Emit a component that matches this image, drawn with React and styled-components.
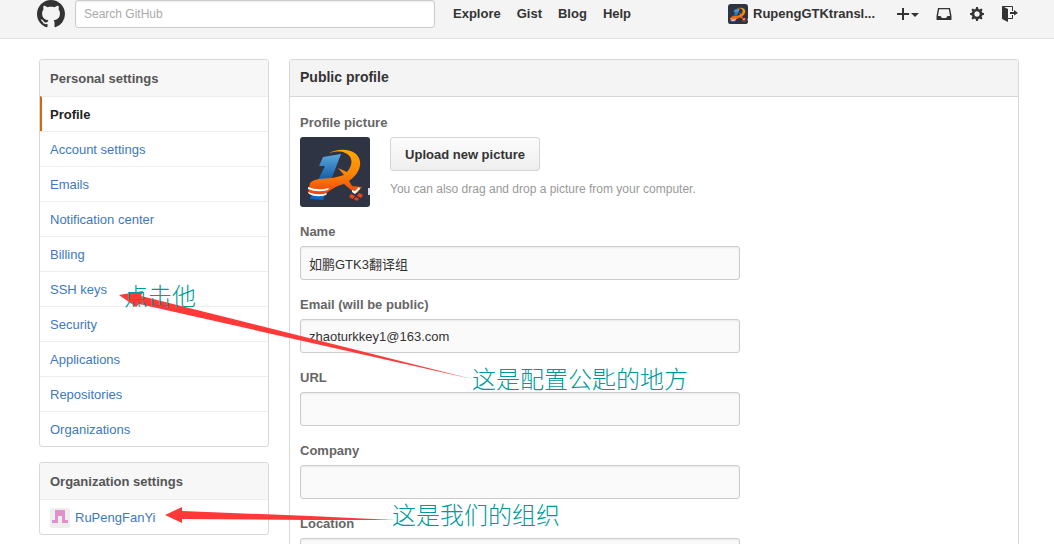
import React from "react";
import styled, { createGlobalStyle } from "styled-components";

const GlobalStyle = createGlobalStyle`
  * { box-sizing: border-box; }
  body {
    margin: 0;
    background: #fff;
    color: #333;
    font: 13px/18px "Liberation Sans", Arial, "Noto Sans CJK SC", sans-serif;
  }
`;

const Page = styled.div`
  position: relative;
  height: 100vh;
  overflow: hidden;
`;

const Header = styled.header`
  background: #f4f4f4;
  border-bottom: 1px solid #e2e2e2;
`;

const HeaderInner = styled.div`
  display: flex;
  align-items: flex-start;
  max-width: 1054px;
  height: 38px;
  margin: 0 auto;
  padding: 0 36px 0 37px;
`;

const LogoLink = styled.a`
  color: #333;
  height: 28px;
  margin-right: 10px;
  svg { display: block; }
`;

const SearchInput = styled.input`
  flex: 0 1 360px;
  min-width: 0;
  height: 28px;
  padding: 0 8px;
  border: 1px solid #ccc;
  border-radius: 3px;
  background: #fff;
  box-shadow: inset 0 1px 2px rgba(0, 0, 0, 0.075);
  font: 12px "Liberation Sans", Arial, sans-serif;
  color: #333;
  &::placeholder { color: #aaa; opacity: 1; }
`;

const TopNav = styled.nav`
  display: flex;
  gap: 16px;
  margin-left: 18px;
  line-height: 28px;
`;

const TopLink = styled.a`
  color: #333;
  font-weight: bold;
  text-decoration: none;
`;

const UserNav = styled.div`
  display: flex;
  align-items: center;
  height: 28px;
  margin-left: auto;
`;

const UserLink = styled(TopLink)`
  display: flex;
  align-items: center;
  gap: 5px;
  width: 149px;
  margin-right: 20px;
  svg { flex: none; }
  span { white-space: nowrap; }
`;

const IconButton = styled.button`
  display: flex;
  margin-right: ${(p) => p.$gap || 0}px;
  padding: 0;
  border: 0;
  background: none;
  color: #333;
  cursor: pointer;
`;

const Content = styled.div`
  display: flex;
  align-items: flex-start;
  gap: 20px;
  max-width: 1054px;
  margin: 0 auto;
  padding: 20px 35px 20px 39px;
`;

const Sidebar = styled.aside`
  display: flex;
  flex: none;
  flex-direction: column;
  gap: 15px;
  width: 230px;
`;

const Menu = styled.nav`
  overflow: hidden;
  border: 1px solid #d8d8d8;
  border-radius: 3px;
`;

const MenuTitle = styled.h2`
  margin: 0;
  padding: 10px 10px 8px;
  background: #f7f7f7;
  color: #555;
  font-size: 13px;
  line-height: 18px;
`;

const MenuItem = styled.a`
  display: flex;
  align-items: center;
  gap: 5px;
  height: 35px;
  padding: 2px 10px 0 ${(p) => (p.$selected ? 8 : 10)}px;
  border-top: 1px solid #eee;
  border-left: ${(p) => (p.$selected ? "2px solid #d26911" : "0")};
  color: ${(p) => (p.$selected ? "#222" : "#4078c0")};
  font-weight: ${(p) => (p.$selected ? "bold" : "normal")};
  text-decoration: none;
`;

const Panel = styled.main`
  flex: 1;
  min-width: 0;
  border: 1px solid #d8d8d8;
  border-radius: 3px;
`;

const PanelTitle = styled.h1`
  margin: 0;
  padding: 8px 10px 10px;
  border-bottom: 1px solid #d8d8d8;
  background: #f4f4f4;
  color: #333;
  font-size: 14px;
  line-height: 18px;
`;

const Form = styled.form`
  display: flex;
  flex-direction: column;
  gap: 16px;
  padding: 17px 10px;
`;

const Field = styled.div`
  display: flex;
  flex-direction: column;
  gap: 5px;
`;

const Label = styled.label`
  color: #666;
  font-weight: bold;
`;

const TextInput = styled.input`
  width: 440px;
  max-width: 100%;
  height: 34px;
  padding: 0 8px;
  border: 1px solid #ccc;
  border-radius: 3px;
  background: #fafafa;
  box-shadow: inset 0 1px 2px rgba(0, 0, 0, 0.075);
  color: #333;
  font: 13px "Liberation Sans", Arial, "Noto Sans CJK SC", sans-serif;
`;

const PictureRow = styled.div`
  display: flex;
  gap: 20px;
`;

const PictureSide = styled.div`
  display: flex;
  flex-direction: column;
  align-items: flex-start;
  gap: 9px;
`;

const UploadButton = styled.button`
  width: 150px;
  height: 34px;
  padding: 0;
  border: 1px solid #d5d5d5;
  border-radius: 3px;
  background: linear-gradient(#fcfcfc, #eee);
  color: #333;
  font: bold 13px "Liberation Sans", Arial, sans-serif;
  white-space: nowrap;
  cursor: pointer;
`;

const Hint = styled.p`
  margin: 0;
  color: #999;
  font-size: 12px;
`;

const Arrows = styled.svg`
  position: absolute;
  top: 0;
  left: 0;
  pointer-events: none;
`;

const Note = styled.span`
  position: absolute;
  top: ${(p) => p.$y}px;
  left: ${(p) => p.$x}px;
  color: #009999;
  font: 300 24px/30px "Noto Sans CJK SC", sans-serif;
  white-space: nowrap;
  pointer-events: none;
`;

const MarkIcon = () => (
  <svg width="28" height="28" viewBox="0 0 16 16" aria-hidden="true">
    <path fill="currentColor" d="M8 0C3.580 0 0 3.580 0 8c0 3.540 2.290 6.530 5.470 7.590.4.070.55-.17.55-.38 0-.19-.01-.82-.01-1.490-2.010.37-2.530-.49-2.690-.94-.09-.23-.48-.94-.82-1.130-.28-.15-.68-.52-.01-.53.63-.01 1.080.58 1.230.82.72 1.210 1.870.87 2.330.66.07-.52.28-.87.51-1.070-1.780-.2-3.640-.89-3.640-3.950 0-.87.31-1.590.82-2.150-.08-.2-.36-1.020.08-2.120 0 0 .67-.21 2.200.82.64-.18 1.320-.27 2-.27s1.360.09 2 .27c1.530-1.040 2.200-.82 2.200-.82.44 1.100.16 1.920.08 2.120.51.56.82 1.270.82 2.150 0 3.070-1.870 3.750-3.650 3.950.29.25.54.73.54 1.480 0 1.070-.01 1.930-.01 2.200 0 .21.15.46.55.38A8.010 8.010 0 0 0 16 8c0-4.420-3.580-8-8-8Z" />
  </svg>
);

const Avatar = ({ size }) => (
  <svg width={size} height={size} viewBox="0 0 70 70" aria-hidden="true">
    <defs>
      <linearGradient id={`blue${size}`} x1="0" y1="0" x2="0" y2="1">
        <stop offset="0" stopColor="#5aa9dc" />
        <stop offset="0.5" stopColor="#1c63ab" />
        <stop offset="1" stopColor="#1464c0" />
      </linearGradient>
      <linearGradient id={`orange${size}`} x1="0" y1="0" x2="0" y2="1">
        <stop offset="0" stopColor="#ffa800" />
        <stop offset="0.55" stopColor="#f98208" />
        <stop offset="1" stopColor="#ee3c10" />
      </linearGradient>
    </defs>
    <rect width="70" height="70" rx={size > 30 ? 3 : 10} fill="#2f3445" />
    <path d="M23 20 41 17 31 43 23 63 10 62 12 57 18 43 25 29 19 29Z" fill={`url(#blue${size})`} />
    <path d="M29 16C36 12 49 11 56 17C65 26 58 38 49 44L52 49 62 50 57 56 51 53 44 47C35 49 30 54 23 58C17 60 12 59 8 56L10 46C14 41 24 42 32 41C37 40 41 39 44 38L38 31 47 35C54 27 53 18 43 15C38 14 33 15 29 16Z" fill={`url(#orange${size})`} />
    <path d="M8 50Q18 54 29 51L28 53Q17 56 8 52ZM8 55Q18 59 27 56L26 58Q17 61 9 57Z" fill="#fff" />
    <path d="m52 53 3 1 4-4 1 2-5 5-3-2Z" fill="#fff" />
    <path d="m51 57 4 2-2 3-4-2Zm8-1 4 2-2 3-4-2Zm-3 4 3 2-2 2-3-2Z" fill="#ef4216" />
    <path d="M68 51h2v7h-2Z" fill="#d9dbe0" />
  </svg>
);

const PlusIcon = () => (
  <svg width="22" height="16" viewBox="0 0 22 16" aria-hidden="true" fill="currentColor">
    <path d="M5 2h2v5h5v2H7v5H5V9H0V7h5ZM14 7h8l-4 4Z" />
  </svg>
);

const InboxIcon = () => (
  <svg width="16" height="16" viewBox="0 0 16 16" aria-hidden="true">
    <path fill="currentColor" fillRule="evenodd" d="M2 2h12l1.500 8v4H.500v-4ZM3.200 3.200 2 10H4.500l1.500 2h4l1.500-2H14l-1.200-6.800Z" />
  </svg>
);

const GearIcon = () => (
  <svg width="14" height="16" viewBox="0 0 14 16" aria-hidden="true">
    <path fill="currentColor" fillRule="evenodd" d="M14 8.770v-1.600l-1.940-.640-.450-1.090.880-1.840-1.130-1.130-1.810.910-1.090-.450-.690-1.920h-1.600l-.630 1.940-1.110.450-1.840-.880-1.130 1.130.910 1.810-.450 1.090L0 7.230v1.590l1.940.640.450 1.090-.880 1.840 1.130 1.130 1.810-.910 1.090.450.690 1.920h1.590l.630-1.940 1.110-.450 1.840.880 1.130-1.130-.920-1.810.470-1.090L14 8.750ZM7 10.700c-1.500 0-2.700-1.200-2.700-2.700s1.200-2.700 2.700-2.700 2.700 1.200 2.700 2.700-1.200 2.700-2.700 2.700Z" />
  </svg>
);

const SignOutIcon = () => (
  <svg width="16" height="16" viewBox="0 0 16 16" aria-hidden="true">
    <path fill="currentColor" fillRule="evenodd" d="M12 9.500V8H8V6h4V4l4 3ZM10 12H6V3L2 1h8v4h1V1c0-.550-.450-1-1-1H1C.450 0 0 .450 0 1v11.380c0 .390.220.730.550.910L6 16.010V13h4c.550 0 1-.450 1-1V9h-1Z" />
  </svg>
);

const OrgIcon = () => (
  <svg width="20" height="20" viewBox="0 0 20 20" aria-hidden="true">
    <rect width="20" height="20" rx="2" fill="#eee" />
    <path fill="#e091c9" d="M5 2h10v10h3v3h-6V8H8v7H2v-3h3Z" />
  </svg>
);

const topLinks = ["Explore", "Gist", "Blog", "Help"];
const menuItems = [
  "Profile", "Account settings", "Emails", "Notification center", "Billing",
  "SSH keys", "Security", "Applications", "Repositories", "Organizations",
];
const fields = [
  { id: "name", label: "Name", value: "如鹏GTK3翻译组" },
  { id: "email", label: "Email (will be public)", value: "zhaoturkkey1@163.com" },
  { id: "url", label: "URL", value: "" },
  { id: "company", label: "Company", value: "" },
  { id: "location", label: "Location", value: "" },
];

export default function App() {
  return (
    <Page>
      <GlobalStyle />
      <Header>
        <HeaderInner>
          <LogoLink href="#" aria-label="GitHub"><MarkIcon /></LogoLink>
          <SearchInput type="text" placeholder="Search GitHub" aria-label="Search GitHub" />
          <TopNav>
            {topLinks.map((t) => <TopLink key={t} href="#">{t}</TopLink>)}
          </TopNav>
          <UserNav>
            <UserLink href="#"><Avatar size={20} /><span>RupengGTKtransl...</span></UserLink>
            <IconButton $gap={17} aria-label="Create new"><PlusIcon /></IconButton>
            <IconButton $gap={18} aria-label="Notifications"><InboxIcon /></IconButton>
            <IconButton $gap={18} aria-label="Settings"><GearIcon /></IconButton>
            <IconButton aria-label="Sign out"><SignOutIcon /></IconButton>
          </UserNav>
        </HeaderInner>
      </Header>
      <Content>
        <Sidebar>
          <Menu>
            <MenuTitle>Personal settings</MenuTitle>
            {menuItems.map((t, i) => (
              <MenuItem key={t} href="#" $selected={i === 0}>{t}</MenuItem>
            ))}
          </Menu>
          <Menu>
            <MenuTitle>Organization settings</MenuTitle>
            <MenuItem href="#"><OrgIcon />RuPengFanYi</MenuItem>
          </Menu>
        </Sidebar>
        <Panel>
          <PanelTitle>Public profile</PanelTitle>
          <Form>
            <Field>
              <Label htmlFor="upload">Profile picture</Label>
              <PictureRow>
                <Avatar size={70} />
                <PictureSide>
                  <UploadButton id="upload" type="button">Upload new picture</UploadButton>
                  <Hint>You can also drag and drop a picture from your computer.</Hint>
                </PictureSide>
              </PictureRow>
            </Field>
            {fields.map((f) => (
              <Field key={f.id}>
                <Label htmlFor={f.id}>{f.label}</Label>
                <TextInput id={f.id} type="text" defaultValue={f.value} />
              </Field>
            ))}
          </Form>
        </Panel>
      </Content>
      <Arrows width="480" height="544" viewBox="0 0 480 544" aria-hidden="true">
        <path fill="#ff3838" d="M119 295 143 291 141 296 472 379 139 304 136 307Z" />
        <path fill="#ff3838" d="M165 515 182 507V511L310 516 394 520 310 520 182 519V523Z" />
      </Arrows>
      <Note $x={124} $y={280}>点击他</Note>
      <Note $x={472} $y={363}>这是配置公匙的地方</Note>
      <Note $x={392} $y={499}>这是我们的组织</Note>
    </Page>
  );
}
